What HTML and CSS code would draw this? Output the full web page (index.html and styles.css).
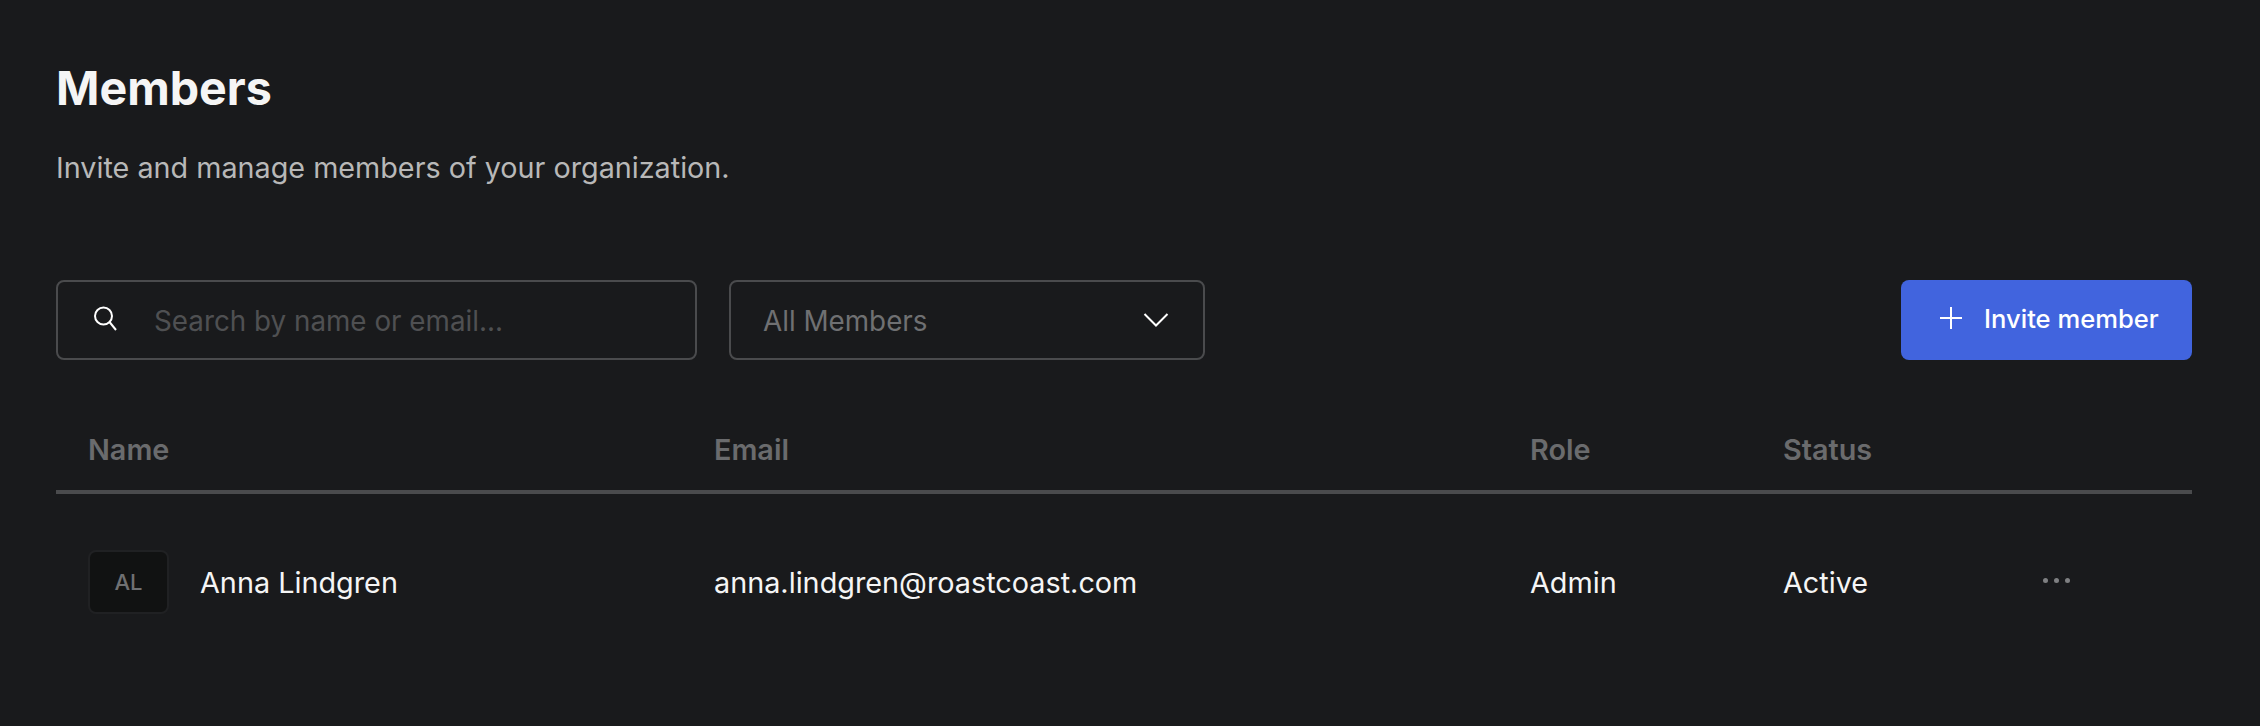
FILE: index.html
```html
<!DOCTYPE html>
<html lang="en">
<head>
<meta charset="utf-8">
<title>Members</title>
<link rel="stylesheet" href="styles.css">
</head>
<body>
<main class="page">
  <h1 class="title">Members</h1>
  <p class="subtitle">Invite and manage members of your organization.</p>
  <div class="toolbar">
    <div class="search">
      <svg class="search-icon" width="26" height="26" viewBox="0 0 26 26" fill="none" stroke="#fff" stroke-width="2"><circle cx="10.500" cy="11" r="8.500"/><path d="M16.500 17l6.500 8"/></svg>
      <span class="placeholder">Search by name or email...</span>
    </div>
    <div class="select">
      <span class="select-label">All Members</span>
      <svg width="26" height="16" viewBox="0 0 26 16" fill="none" stroke="#fff" stroke-width="2"><path d="M1.500 2l11.500 11.500L24.500 2"/></svg>
    </div>
    <button class="invite">
      <svg width="24" height="24" viewBox="0 0 24 24" fill="none" stroke="#fff" stroke-width="2"><path d="M12 1v22M1 12h22"/></svg>
      <span>Invite member</span>
    </button>
  </div>
  <div class="table-head">
    <span>Name</span><span>Email</span><span>Role</span><span>Status</span>
  </div>
  <div class="table-row">
    <div class="member"><span class="avatar">AL</span><span>Anna Lindgren</span></div>
    <span>anna.lindgren@roastcoast.com</span>
    <span>Admin</span>
    <span>Active</span>
    <span class="dots"><i></i><i></i><i></i></span>
  </div>
</main>
</body>
</html>
```
FILE: styles.css
```css
* { box-sizing: border-box; }
html, body { margin: 0; height: 100%; }
body { background: #191a1c; color: #fff; font-family: Inter, "Liberation Sans", sans-serif; overflow: hidden; }
.page { padding: 60px 68px 0 56px; }
.title { margin: 0; font-size: 46.6px; line-height: 56px; font-weight: 700; color: #f5f5f5; }
.subtitle { margin: 32px 0 0; font-size: 28.75px; line-height: 40px; color: #b8b8b8; }
.toolbar { display: flex; align-items: stretch; height: 80px; margin-top: 92px; }
.search, .select { display: flex; align-items: center; border: 2px solid #4a4b4d; border-radius: 8px; font-size: 27.8px; }
.search { width: 641px; padding-left: 35px; gap: 35px; }
.search-icon { margin-top: -4px; }
.placeholder { color: #4f5052; padding-top: 2px; }
.select { width: 476px; margin-left: 32px; padding: 0 34px 0 32px; justify-content: space-between; }
.select-label { color: #6f7072; padding-top: 2px; }
.invite { margin-left: auto; width: 291px; padding: 0 0 4px 38px; display: flex; align-items: center; gap: 21px; background: #4164de; border: 0; border-radius: 8px; color: #fff; font: 500 25.6px Inter, "Liberation Sans", sans-serif; }
.table-head, .table-row { display: grid; grid-template-columns: 626px 816px 253px 260px 1fr; padding-left: 32px; align-items: center; }
.table-head { margin-top: 68px; height: 66px; padding-bottom: 20px; border-bottom: 4px solid #4a4b4d; font-size: 28.8px; font-weight: 600; color: #6a6b6d; }
.table-row { height: 180px; padding-bottom: 4px; font-size: 28.8px; color: #f5f5f5; }
.member { display: flex; align-items: center; gap: 31px; }
.avatar { width: 81px; height: 64px; display: flex; align-items: center; justify-content: center; background: #111212; border: 2px solid #202123; border-radius: 8px; font-size: 22px; font-weight: 500; color: #6f7072; }
.dots { display: flex; gap: 6px; margin-bottom: 4px; }
.dots i { width: 5px; height: 5px; border-radius: 50%; background: #7f8082; }
```
